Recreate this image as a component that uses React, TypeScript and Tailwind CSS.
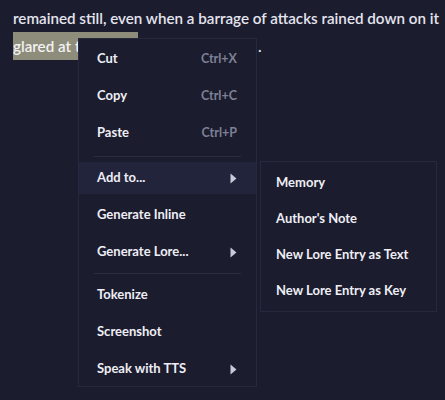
import React from "react";

const Arrow = () => (
  <svg width="7" height="11" viewBox="0 0 7 11" className="shrink-0">
    <path d="M0.5 0.5 L6.5 5.5 L0.5 10.5 Z" fill="#c9c9dc" />
  </svg>
);

type Item = { label: string; shortcut?: string; sub?: boolean; active?: boolean };

const Row = ({ item }: { item: Item }) => (
  <div
    className={
      "flex h-8 items-center justify-between pl-[18px] pr-[19px] " +
      (item.active ? "bg-[#22243b]" : "")
    }
  >
    <span className="text-[13px] font-bold text-[#eeeef5]">{item.label}</span>
    {item.shortcut && (
      <span className="text-[12.5px] font-bold text-[#7f8096]">{item.shortcut}</span>
    )}
    {item.sub && <Arrow />}
  </div>
);

export default function App() {
  const font = { fontFamily: 'Lato, "Noto Sans", sans-serif' };
  return (
    <div className="relative h-[400px] w-[445px] overflow-hidden bg-[#1b1c2e]" style={font}>
      <div className="whitespace-nowrap pl-[13px] pt-[4px] text-[15.2px] font-semibold leading-[28px] text-[#e4e4ee]">
        <div>remained still, even when a barrage of attacks rained down on it</div>
        <div>
          <span className="inline-block w-[125px] bg-[#8e8d7b] text-[#f2f2f2]">glared at the</span>
          <span className="inline-block w-[120px]">creature</span>.
        </div>
      </div>

      <div className="absolute left-[78px] top-[38px] flex w-[179px] flex-col border border-[#26283d] bg-[#1b1c2e] pb-[1px] pt-[4px]">
        <div className="flex flex-col gap-[5px]">
          <Row item={{ label: "Cut", shortcut: "Ctrl+X" }} />
          <Row item={{ label: "Copy", shortcut: "Ctrl+C" }} />
          <Row item={{ label: "Paste", shortcut: "Ctrl+P" }} />
        </div>
        <div className="mx-[15px] mb-[5px] mt-[7px] h-px bg-[#2a2c42]" />
        <div className="flex flex-col gap-[5px]">
          <Row item={{ label: "Add to...", sub: true, active: true }} />
          <Row item={{ label: "Generate Inline" }} />
          <Row item={{ label: "Generate Lore...", sub: true }} />
        </div>
        <div className="mx-[15px] mb-[5px] mt-[5px] h-px bg-[#2a2c42]" />
        <div className="flex flex-col gap-[5px]">
          <Row item={{ label: "Tokenize" }} />
          <Row item={{ label: "Screenshot" }} />
          <Row item={{ label: "Speak with TTS", sub: true }} />
        </div>
      </div>

      <div className="absolute left-[260px] top-[161px] flex w-[177px] flex-col gap-1 border border-[#26283d] bg-[#1b1c2e] pb-[4px] pt-[5px]">
        {["Memory", "Author's Note", "New Lore Entry as Text", "New Lore Entry as Key"].map((l) => (
          <div key={l} className="flex h-8 items-center pl-[15px]">
            <span className="text-[13px] font-bold text-[#eeeef5]">{l}</span>
          </div>
        ))}
      </div>
    </div>
  );
}
